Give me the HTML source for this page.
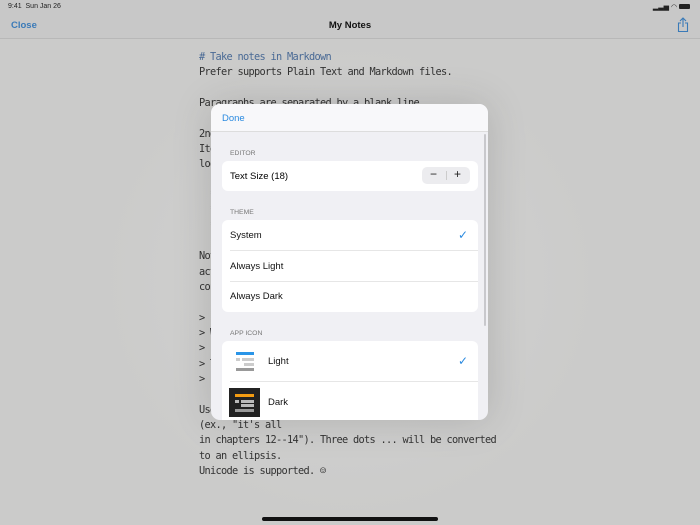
<!DOCTYPE html>
<html><head><meta charset="utf-8"><style>
*{margin:0;padding:0;box-sizing:border-box}
body{width:700px;height:525px;overflow:hidden;background:#cbcbca;font-family:"Liberation Sans",sans-serif;position:relative}
.bgglow{position:absolute;left:100px;top:40px;width:500px;height:480px;background:radial-gradient(ellipse at center,#d3d3d2 0%,#cbcbca 70%)}
.status{position:absolute;top:3px;left:8px;font-size:7px;color:#222}
.nav{position:absolute;top:0;left:0;width:700px;height:39px;border-bottom:1px solid #b8b8b8;background:#c8c8c8}
.close{position:absolute;left:11px;top:20px;font-size:9.5px;color:#3a7ab8;font-weight:bold}
.title{position:absolute;left:0;width:700px;text-align:center;top:20px;font-size:9.5px;font-weight:bold;color:#111}
.code{position:absolute;left:199px;top:50px;font-family:"DejaVu Sans Mono","Liberation Mono",monospace;font-size:10.3px;letter-spacing:-0.7px;line-height:15.33px;color:#333;white-space:pre}
.h{color:#4a6a95}
.modal{position:absolute;left:211px;top:104px;width:277px;height:316px;background:#f0f0f4;border-radius:9px;overflow:hidden;box-shadow:0 0 40px rgba(0,0,0,.15)}
.mh{height:28px;background:#f8f8fa;border-bottom:1px solid #ddd;position:relative}
.done{position:absolute;left:11px;top:9px;font-size:9.5px;color:#2a8ae0}
.lbl{position:absolute;left:19px;font-size:6.8px;color:#777}
.card{position:absolute;left:11px;width:256px;background:#fff;border-radius:6px;overflow:hidden}
.row{position:relative;font-size:9.5px;color:#111;border-bottom:1px solid #e6e6e6;margin-left:8px}
.row:last-child{border-bottom:none}
.chk{position:absolute;right:10px;color:#2a8ae0;font-size:12px}
.scroll{position:absolute;left:484px;top:134px;width:2px;height:192px;background:#c8c8cc;border-radius:1px}
</style></head><body>
<div class="bgglow"></div>
<div class="nav"></div>
<div class="status">9:41&nbsp; Sun Jan 26</div>
<div style="position:absolute;right:10px;top:3px;font-size:7px;color:#222">▂▃▅ ◠ <span style="display:inline-block;width:11px;height:5px;background:#222;border-radius:1px"></span></div>
<div class="close">Close</div>
<div class="title">My Notes</div>
<svg style="position:absolute;left:677px;top:17px" width="12" height="16" viewBox="0 0 12 16"><path d="M6 1v9M3 4l3-3 3 3M4 6H1.5v8.5h9V6H8" fill="none" stroke="#3a7ab8" stroke-width="1.1"/></svg>
<div class="code"><span class="h"># Take notes in Markdown</span>
Prefer supports Plain Text and Markdown files.

Paragraphs are separated by a blank line.

2nd
Ite
loo

  *
  *
  *

Not
act
con

> I
> W
>
> T
> 1

Use
(ex., "it's all
in chapters 12--14"). Three dots ... will be converted
to an ellipsis.
Unicode is supported. ☺</div>
<div class="modal">
 <div class="mh"><div class="done">Done</div></div>
 <div class="lbl" style="top:46px">EDITOR</div>
 <div class="card" style="top:57px;height:30px">
  <div style="position:absolute;left:8px;top:10px;font-size:9.5px">Text Size (18)</div>
  <div style="position:absolute;left:200px;top:6px;width:48px;height:17px;background:#ececef;border-radius:5px;font-size:12px;color:#222">
   <span style="position:absolute;left:8px;top:0">−</span><span style="position:absolute;left:24px;top:4px;width:1px;height:9px;background:#ccc"></span><span style="position:absolute;left:32px;top:0">+</span></div>
 </div>
 <div class="lbl" style="top:105px">THEME</div>
 <div class="card" style="top:116px;height:92px">
  <div class="row" style="height:31px;line-height:31px">System<span class="chk">✓</span></div>
  <div class="row" style="height:31px;line-height:31px">Always Light</div>
  <div class="row" style="height:30px;line-height:30px">Always Dark</div>
 </div>
 <div class="lbl" style="top:226px">APP ICON</div>
 <div class="card" style="top:237px;height:90px">
  <div class="row" style="height:41px;line-height:41px;margin-left:8px;padding-left:38px">
   <svg style="position:absolute;left:4px;top:9px" width="22" height="22"><rect x="2" y="2" width="18" height="3" fill="#2a95e8"/><rect x="2" y="8" width="4" height="3" fill="#ccc"/><rect x="8" y="8" width="12" height="3" fill="#ccc"/><rect x="10" y="13" width="10" height="3" fill="#ccc"/><rect x="2" y="18" width="18" height="3" fill="#999"/></svg>
   Light<span class="chk">✓</span></div>
  <div class="row" style="height:41px;line-height:41px;margin-left:0;padding-left:46px">
   <svg style="position:absolute;left:7px;top:6px" width="31" height="29"><rect width="31" height="29" fill="#222"/><rect x="6" y="6" width="19" height="3" fill="#f39c12"/><rect x="6" y="12" width="4" height="3" fill="#bbb"/><rect x="12" y="12" width="13" height="3" fill="#bbb"/><rect x="12" y="16" width="13" height="3" fill="#bbb"/><rect x="6" y="21" width="19" height="3" fill="#999"/></svg>
   Dark</div>
 </div>
</div>
<div class="scroll"></div>
<div style="position:absolute;left:262px;top:517px;width:176px;height:4px;background:#111;border-radius:2px"></div>
</body></html>
